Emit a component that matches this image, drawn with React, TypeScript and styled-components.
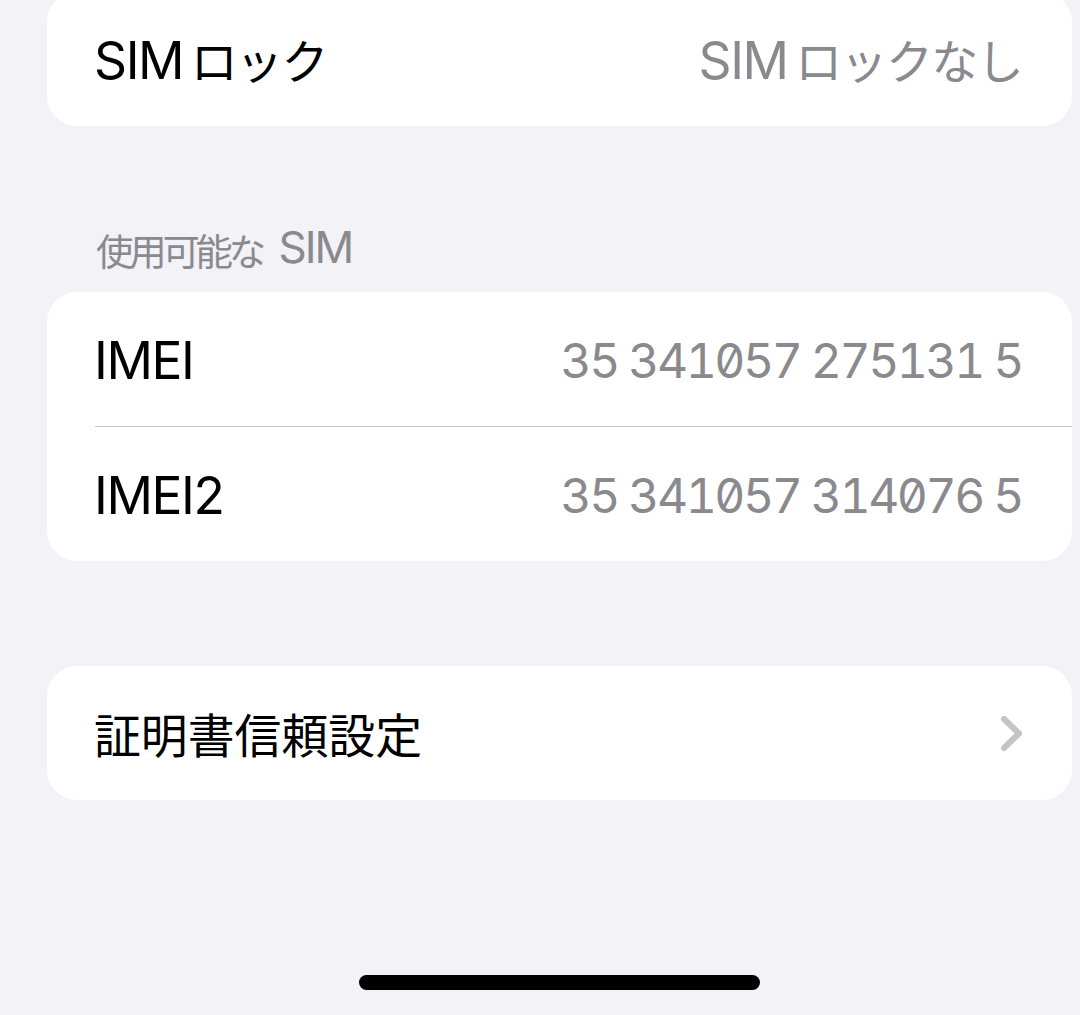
import React from "react";
import styled, { createGlobalStyle } from "styled-components";

const GlobalStyle = createGlobalStyle`
  html, body {
    margin: 0;
    padding: 0;
    background: #f2f2f7;
  }
  body {
    width: 1080px;
    height: 1015px;
    overflow: hidden;
    font-family: "Inter", "Liberation Sans", "Noto Sans CJK JP", sans-serif;
    -webkit-font-smoothing: antialiased;
  }
`;

const Page = styled.div`
  box-sizing: border-box;
  width: 1080px;
  height: 1015px;
  padding: 0 8px 0 47px;
  display: flex;
  flex-direction: column;
  background: #f2f2f7;
`;

const Card = styled.section<{ $first?: boolean }>`
  background: #ffffff;
  border-radius: 30px;
  overflow: hidden;
  margin-top: ${(p) => (p.$first ? "-8px" : "0")};
`;

const Row = styled.div`
  box-sizing: border-box;
  height: 134px;
  padding: 4px 50px 0 47px;
  display: flex;
  align-items: center;
  justify-content: space-between;
  font-size: 51.5px;
  line-height: 1;
  letter-spacing: -1.4px;
`;

const Label = styled.span`
  color: #000000;
  white-space: nowrap;
`;

const Value = styled.span<{ $digits?: boolean }>`
  color: #8a8a8e;
  white-space: nowrap;
  font-size: ${(p) => (p.$digits ? "48px" : "inherit")};
  letter-spacing: ${(p) => (p.$digits ? "-2.45px" : "inherit")};
  font-variant-numeric: tabular-nums;
  font-feature-settings: "tnum" 1, "zero" 1;
`;

const Ja = styled.span<{ $gap?: boolean; $tight?: boolean }>`
  font-family: "Noto Sans CJK JP", sans-serif;
  font-size: 0.91em;
  letter-spacing: ${(p) => (p.$tight ? "-1.5px" : "0")};
  line-height: 1;
  margin-left: ${(p) => (p.$gap ? "0.16em" : "0")};
`;

const Divider = styled.div`
  height: 1px;
  margin-left: 48px;
  background: #c6c6c8;
`;

const SectionHeader = styled.div`
  box-sizing: border-box;
  height: 166px;
  padding: 0 0 23px 49px;
  display: flex;
  align-items: flex-end;
  color: #8a8a8e;
  font-size: 44px;
  line-height: 44px;
  letter-spacing: -2px;
`;

const HeaderJa = styled.span`
  font-family: "Noto Sans CJK JP", sans-serif;
  font-size: 0.85em;
  line-height: 1;
  letter-spacing: -4.2px;
  margin-right: 0.44em;
`;

const Spacer = styled.div<{ $h: number }>`
  height: ${(p) => p.$h}px;
  flex: none;
`;

const Fill = styled.div`
  flex: 1;
`;

const Chevron = styled.svg`
  display: block;
  width: 21px;
  height: 35px;
  margin-top: -4px;
`;

const HomeBar = styled.div`
  align-self: center;
  width: 401px;
  height: 15px;
  border-radius: 8px;
  background: #000000;
  margin-bottom: 25px;
`;

export default function App() {
  return (
    <>
      <GlobalStyle />
      <Page>
        <Card $first>
          <Row>
            <Label>
              SIM<Ja $gap $tight>ロック</Ja>
            </Label>
            <Value>
              SIM<Ja $gap $tight>ロックなし</Ja>
            </Value>
          </Row>
        </Card>

        <SectionHeader>
          <HeaderJa>使用可能な</HeaderJa>SIM
        </SectionHeader>

        <Card>
          <Row>
            <Label>IMEI</Label>
            <Value $digits>35 341057 275131 5</Value>
          </Row>
          <Divider />
          <Row>
            <Label>IMEI2</Label>
            <Value $digits>35 341057 314076 5</Value>
          </Row>
        </Card>

        <Spacer $h={105} />

        <Card>
          <Row>
            <Label>
              <Ja>証明書信頼設定</Ja>
            </Label>
            <Chevron viewBox="0 0 21 35" aria-hidden="true">
              <polyline
                points="3,3 18,17.5 3,32"
                fill="none"
                stroke="#c4c4c7"
                strokeWidth="6"
                strokeLinecap="round"
                strokeLinejoin="round"
              />
            </Chevron>
          </Row>
        </Card>

        <Fill />
        <HomeBar />
      </Page>
    </>
  );
}
